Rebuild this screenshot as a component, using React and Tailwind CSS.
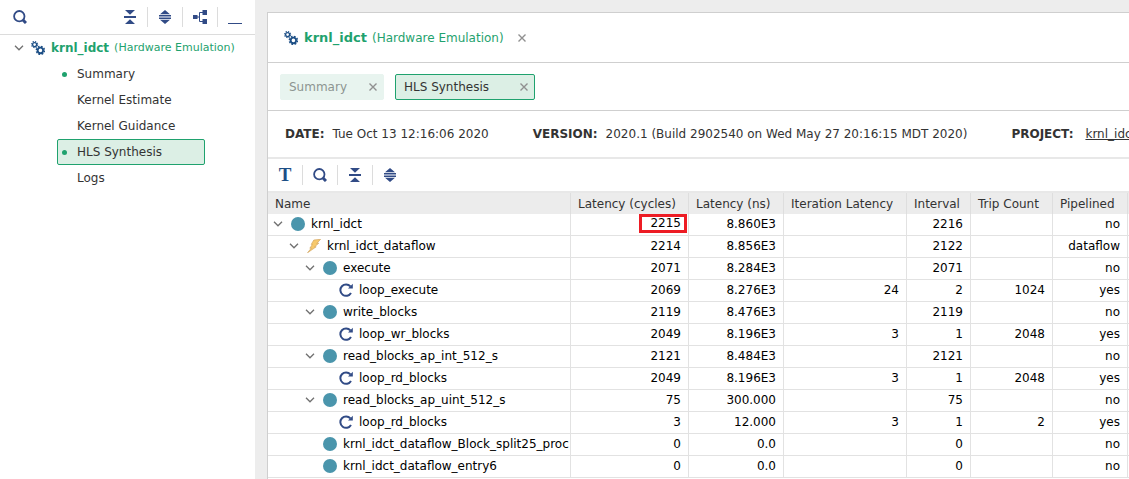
const NAVY = "#314b86";

function Svg({ children, className = "" }) {
  return (
    <svg width="14" height="14" viewBox="0 0 14 14" className={`shrink-0 ${className}`} aria-hidden="true">
      {children}
    </svg>
  );
}

const SearchIcon = () => (
  <Svg>
    <circle cx="6.3" cy="6.2" r="5.2" fill="none" stroke={NAVY} strokeWidth="1.8" />
    <path d="M10 10L13 13" stroke={NAVY} strokeWidth="3" />
  </Svg>
);

const CollapseIcon = () => (
  <Svg>
    <path d="M2 0H12L7 4.8ZM1 6H13V8H1ZM7 9.2L12 14H2Z" fill={NAVY} />
  </Svg>
);

const ExpandIcon = () => (
  <Svg>
    <path d="M7 0L12 4.2H2ZM1 5H13V6.4H1ZM1 7.6H13V9H1ZM2 9.8H12L7 14Z" fill={NAVY} />
  </Svg>
);

const HierarchyIcon = () => (
  <Svg>
    <path d="M0 5H4.5V9H0ZM9.5 0H14V5H9.5ZM9.5 9H14V14H9.5Z" fill={NAVY} />
    <path d="M4 7H6.5M10 2.5H6.5V11.5H10" fill="none" stroke={NAVY} />
  </Svg>
);

const MinimizeIcon = () => (
  <Svg>
    <path d="M0 13H14V14H0Z" fill={NAVY} />
  </Svg>
);

const GearsIcon = () => (
  <Svg>
    <g fill="none" stroke="#1d4f86">
      <circle cx="3.6" cy="3.6" r="2" strokeWidth="1.3" />
      <circle cx="3.6" cy="3.6" r="3" strokeWidth="1.2" strokeDasharray="1.25 1.1" />
      <circle cx="9.4" cy="9.4" r="2.7" strokeWidth="1.8" />
      <circle cx="9.4" cy="9.4" r="4.1" strokeWidth="1.4" strokeDasharray="1.8 1.42" />
    </g>
  </Svg>
);

const CircleIcon = () => (
  <Svg>
    <circle cx="7" cy="7" r="7" fill="#4a95ac" />
  </Svg>
);

const BoltIcon = () => (
  <Svg>
    <path d="M6.8 1L13.6 .3L9.8 4.4L11.8 4.2L7.6 7.8L9.2 7.8L.5 13.8L4.4 9L2.8 9.2L5.4 5.4L4.2 5.4Z" fill="#f7c96c" stroke="#cf9d55" strokeWidth=".6" />
  </Svg>
);

const LoopIcon = () => (
  <Svg>
    <path d="M11.4 3.4A5.7 5.7 0 1 0 12 10" fill="none" stroke={NAVY} strokeWidth="2" />
    <path d="M13.8 .8V5.6H9Z" fill={NAVY} />
  </Svg>
);

function Chevron() {
  return (
    <svg width="10" height="6" viewBox="0 0 10 6" className="shrink-0" aria-hidden="true">
      <path d="M1 .8L5 4.8L9 .8" fill="none" stroke="#707070" strokeWidth="1.3" />
    </svg>
  );
}

function CloseIcon() {
  return (
    <svg width="8" height="8" viewBox="0 0 8 8" aria-hidden="true">
      <path d="M.5 .5L7.5 7.5M7.5 .5L.5 7.5" stroke="#909090" strokeWidth="1.4" />
    </svg>
  );
}

function ToolButton({ label, children }) {
  return (
    <button type="button" aria-label={label} className="flex h-5 w-[34px] items-center justify-center">
      {children}
    </button>
  );
}

const Divider = () => <span className="h-5 w-px bg-[#dcdcdc]" />;

const navItems = [
  { label: "Summary", open: true },
  { label: "Kernel Estimate" },
  { label: "Kernel Guidance" },
  { label: "HLS Synthesis", open: true, selected: true },
  { label: "Logs" },
];

function Sidebar() {
  return (
    <aside className="w-[255px] shrink-0 bg-white">
      <div className="flex h-[35px] items-center border-b border-[#dcdcdc] px-[3px]">
        <ToolButton label="Search"><SearchIcon /></ToolButton>
        <div className="ml-auto flex items-center">
          <ToolButton label="Collapse all"><CollapseIcon /></ToolButton>
          <Divider />
          <ToolButton label="Expand all"><ExpandIcon /></ToolButton>
          <Divider />
          <ToolButton label="Hierarchy"><HierarchyIcon /></ToolButton>
          <Divider />
          <ToolButton label="Minimize"><MinimizeIcon /></ToolButton>
        </div>
      </div>
      <nav>
        <button type="button" className="flex h-[26px] w-full items-center pl-[14px] text-[#1fa26e]">
          <Chevron />
          <span className="ml-[7px] flex"><GearsIcon /></span>
          <b className="ml-[6px] whitespace-nowrap">krnl_idct</b>
          <span className="ml-[5px] text-[11px] whitespace-nowrap">(Hardware Emulation)</span>
        </button>
        <ul className="pr-[50px] pl-[57px]">
          {navItems.map((item) => (
            <li key={item.label}>
              <a
                href="#"
                className={`flex h-[26px] items-center rounded-xs border pl-1 ${item.selected ? "border-[#1fa26e] bg-[#dcefe5]" : "border-transparent"}`}
              >
                <span className={`mr-[10px] size-[5px] rounded-full ${item.open ? "bg-[#1fa26e]" : ""}`} />
                {item.label}
              </a>
            </li>
          ))}
        </ul>
      </nav>
    </aside>
  );
}

const columns = ["Name", "Latency (cycles)", "Latency (ns)", "Iteration Latency", "Interval", "Trip Count", "Pipelined"];

const rows = [
  [0, "circle", "krnl_idct", true, "2215", "8.860E3", "", "2216", "", "no"],
  [1, "bolt", "krnl_idct_dataflow", true, "2214", "8.856E3", "", "2122", "", "dataflow"],
  [2, "circle", "execute", true, "2071", "8.284E3", "", "2071", "", "no"],
  [3, "loop", "loop_execute", false, "2069", "8.276E3", "24", "2", "1024", "yes"],
  [2, "circle", "write_blocks", true, "2119", "8.476E3", "", "2119", "", "no"],
  [3, "loop", "loop_wr_blocks", false, "2049", "8.196E3", "3", "1", "2048", "yes"],
  [2, "circle", "read_blocks_ap_int_512_s", true, "2121", "8.484E3", "", "2121", "", "no"],
  [3, "loop", "loop_rd_blocks", false, "2049", "8.196E3", "3", "1", "2048", "yes"],
  [2, "circle", "read_blocks_ap_uint_512_s", true, "75", "300.000", "", "75", "", "no"],
  [3, "loop", "loop_rd_blocks", false, "3", "12.000", "3", "1", "2", "yes"],
  [2, "circle", "krnl_idct_dataflow_Block_split25_proc", false, "0", "0.0", "", "0", "", "no"],
  [2, "circle", "krnl_idct_dataflow_entry6", false, "0", "0.0", "", "0", "", "no"],
];

const icons = { circle: CircleIcon, bolt: BoltIcon, loop: LoopIcon };
const indents = ["pl-[5px]", "pl-[21px]", "pl-[37px]", "pl-[53px]"];

function ResultTable() {
  return (
    <table className="w-full table-fixed border-separate border-spacing-0">
      <colgroup>
        <col className="w-[303px]" />
        <col className="w-[118px]" />
        <col className="w-[95px]" />
        <col className="w-[123px]" />
        <col className="w-[64px]" />
        <col className="w-[82px]" />
        <col className="w-[75px]" />
        <col />
      </colgroup>
      <thead>
        <tr className="bg-[#ececec] text-left">
          {columns.map((c) => (
            <th key={c} scope="col" className="h-[21px] border-r border-[#dedede] p-0 pl-[7px] leading-5 font-normal whitespace-nowrap">
              {c}
            </th>
          ))}
          <td />
        </tr>
      </thead>
      <tbody className="text-black">
        {rows.map(([level, icon, name, expandable, ...values], r) => {
          const Icon = icons[icon];
          return (
            <tr key={r} className="align-top">
              <td className="h-[22px] border-r border-b border-[#e2e2e2] p-0">
                <div className={`flex items-center overflow-hidden leading-5 ${indents[level]}`}>
                  {expandable ? <Chevron /> : <span className="w-[10px] shrink-0" />}
                  <span className="mr-[6px] ml-2 flex"><Icon /></span>
                  <span className="whitespace-nowrap">{name}</span>
                </div>
              </td>
              {values.map((v, i) => (
                <td key={i} className="border-r border-b border-[#e2e2e2] p-0 text-right leading-5">
                  {r === 0 && i === 0 ? (
                    <span className="mr-px inline-block border-3 border-[#ed1c24] pr-[3px] pl-2 align-top leading-[13px]">{v}</span>
                  ) : (
                    <span className="pr-[7px]">{v}</span>
                  )}
                </td>
              ))}
              <td className="border-b border-[#e2e2e2]" />
            </tr>
          );
        })}
      </tbody>
    </table>
  );
}

function Tab({ label, active }) {
  return (
    <div
      className={`flex h-[26px] items-center justify-between rounded-xs border pr-[6px] pl-2 ${active ? "w-[140px] border-[#1fa26e] bg-[#dcefe5]" : "w-[104px] border-[#e8f4ef] bg-[#e8f4ef] text-[#8d9491]"}`}
    >
      <button type="button">{label}</button>
      <button type="button" aria-label={`Close ${label}`}><CloseIcon /></button>
    </div>
  );
}

export default function App() {
  return (
    <div className="flex min-h-screen overflow-hidden bg-[#ededed] font-['DejaVu_Sans',sans-serif] text-xs text-[#333]">
      <Sidebar />
      <main className="mt-3 ml-3 min-w-0 flex-1 overflow-hidden border-t border-l border-[#cfcfcf] bg-white">
        <div className="flex h-[50px] items-center border-b border-[#cfcfcf] pl-4 text-[#1fa26e]">
          <GearsIcon />
          <b className="ml-[6px] text-[13px]">krnl_idct</b>
          <span className="ml-[5px]">(Hardware Emulation)</span>
          <button type="button" aria-label="Close krnl_idct" className="ml-[14px]"><CloseIcon /></button>
        </div>
        <div className="flex h-12 items-center gap-[11px] border-b border-[#cfcfcf] pl-3">
          <Tab label="Summary" />
          <Tab label="HLS Synthesis" active />
        </div>
        <dl className="flex h-12 items-center border-b-2 border-[#e8e8e8] pl-[17px] whitespace-nowrap">
          <dt className="font-bold">DATE:</dt>
          <dd className="mr-[44px] ml-2">Tue Oct 13 12:16:06 2020</dd>
          <dt className="font-bold">VERSION:</dt>
          <dd className="mr-[44px] ml-2">2020.1 (Build 2902540 on Wed May 27 20:16:15 MDT 2020)</dd>
          <dt className="font-bold">PROJECT:</dt>
          <dd className="ml-3"><a href="#" className="underline">krnl_idct</a></dd>
        </dl>
        <div className="flex h-[34px] items-center border-b-2 border-[#e8e8e8]">
          <ToolButton label="Text format">
            <span className="font-['Liberation_Serif',serif] text-[19px] leading-5 font-bold text-[#1d4f86]">T</span>
          </ToolButton>
          <Divider />
          <ToolButton label="Search"><SearchIcon /></ToolButton>
          <Divider />
          <ToolButton label="Collapse all"><CollapseIcon /></ToolButton>
          <Divider />
          <ToolButton label="Expand all"><ExpandIcon /></ToolButton>
        </div>
        <ResultTable />
      </main>
    </div>
  );
}
